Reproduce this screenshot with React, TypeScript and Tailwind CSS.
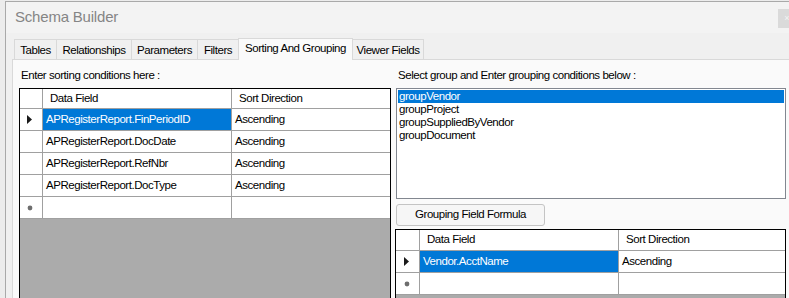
import React from "react";

type Row = { field: string; dir: string };

const sortRows: Row[] = [
  { field: "APRegisterReport.FinPeriodID", dir: "Ascending" },
  { field: "APRegisterReport.DocDate", dir: "Ascending" },
  { field: "APRegisterReport.RefNbr", dir: "Ascending" },
  { field: "APRegisterReport.DocType", dir: "Ascending" },
];

const groups = ["groupVendor", "groupProject", "groupSuppliedByVendor", "groupDocument"];

const tabs = [
  { label: "Tables", w: "w-[42px]" },
  { label: "Relationships", w: "w-[75px]" },
  { label: "Parameters", w: "w-[66px]" },
  { label: "Filters", w: "w-[41px]" },
  { label: "Sorting And Grouping", w: "w-[115px]", active: true },
  { label: "Viewer Fields", w: "w-[71px]" },
];

function CurrentMark() {
  return (
    <svg width="6" height="9" viewBox="0 0 6 9">
      <path d="M0 0 L5 4.5 L0 9 Z" fill="#1a1a1a" />
    </svg>
  );
}

function NewMark() {
  return (
    <svg width="6" height="6" viewBox="0 0 6 6">
      <circle cx="3" cy="3" r="2.4" fill="#6e6e6e" />
    </svg>
  );
}

function Grid({
  rows,
  headW,
  col1W,
  headH,
}: {
  rows: Row[];
  headW: string;
  col1W: string;
  headH: string;
}) {
  return (
    <div className="flex h-full flex-col border border-black bg-[#ababab]">
      <div className={`flex ${headH} shrink-0 border-b border-[#a0a0a0] bg-white`}>
        <div className={`${headW} shrink-0 border-r border-[#a0a0a0]`} />
        <div className={`${col1W} shrink-0 border-r border-[#a0a0a0] pl-[7px] leading-[19px]`}>
          Data Field
        </div>
        <div className="flex-1 pl-[7px] leading-[19px]">Sort Direction</div>
      </div>
      {rows.map((r, i) => (
        <div key={r.field} className="flex h-[22px] shrink-0 border-b border-[#a0a0a0] bg-white">
          <div
            className={`${headW} flex shrink-0 items-center justify-center border-r border-[#a0a0a0] pr-[2px]`}
          >
            {i === 0 && <CurrentMark />}
          </div>
          <div
            className={`${col1W} shrink-0 border-r border-[#a0a0a0] pl-[3px] leading-[21px] ${
              i === 0 ? "bg-[#0078d7] text-white" : ""
            }`}
          >
            {r.field}
          </div>
          <div className="flex-1 pl-[3px] leading-[21px]">{r.dir}</div>
        </div>
      ))}
      <div className="flex h-[22px] shrink-0 border-b border-[#a0a0a0] bg-white">
        <div
          className={`${headW} flex shrink-0 items-center justify-center border-r border-[#a0a0a0] pr-[2px]`}
        >
          <NewMark />
        </div>
        <div className={`${col1W} shrink-0 border-r border-[#a0a0a0]`} />
        <div className="flex-1" />
      </div>
    </div>
  );
}

export default function App() {
  return (
    <div
      className="h-[298px] w-[789px] overflow-hidden bg-[#ececec] pl-[5px] pt-[1px] text-[11.5px] tracking-[-0.45px] text-black"
      style={{ fontFamily: '"Liberation Sans", Arial, sans-serif' }}
    >
      <div className="flex h-full flex-col border-l border-t border-[#a9a9a9] bg-[#f0f0f0]">
        {/* title bar */}
        <div className="flex h-[31px] shrink-0 items-start justify-between bg-[#f3f3f3]">
          <span className="pl-[9px] pt-[5px] text-[15px] leading-[20px] tracking-[-0.2px] text-[#858585]">
            Schema Builder
          </span>
          <div className="mt-[7px] flex h-[19px] w-[11px] items-center justify-end bg-[#dadada] text-[9px] leading-none text-[#f4f4f4]">
            ×
          </div>
        </div>

        {/* tab strip */}
        <div className="flex h-[26px] shrink-0 items-end pl-[8px]">
          {tabs.map((t, i) =>
            t.active ? (
              <div
                key={t.label}
                className={`${t.w} relative z-10 -mb-[1px] h-[22px] border-x border-t border-[#d9d9d9] bg-[#fafafa] text-center leading-[18px]`}
              >
                {t.label}
              </div>
            ) : (
              <div
                key={t.label}
                className={`${t.w} h-[20px] border-t border-[#d9d9d9] ${
                  i === tabs.length - 1 ? "border-r" : ""
                } ${tabs[i - 1]?.active ? "" : "border-l"} bg-[#f0f0f0] pt-[1px] text-center leading-[19px]`}
              >
                {t.label}
              </div>
            )
          )}
        </div>

        {/* tab page */}
        <div className="ml-[6px] flex min-h-0 flex-1 gap-[4px] border-l border-t border-[#d9d9d9] bg-[#fafafa] pl-[6px]">
          <div className="flex w-[372px] shrink-0 flex-col">
            <div className="h-[28px] shrink-0 pl-[2px] pt-[1px] leading-[28px]">
              Enter sorting conditions here :
            </div>
            <div className="min-h-0 flex-1">
              <div className="h-[240px]">
                <Grid rows={sortRows} headW="w-[23px]" col1W="w-[189px]" headH="h-[20px]" />
              </div>
            </div>
          </div>

          <div className="flex w-[391px] shrink-0 flex-col">
            <div className="h-[28px] shrink-0 pl-[3px] pt-[1px] leading-[28px]">
              Select group and Enter grouping conditions below :
            </div>
            <div className="ml-[1px] h-[111px] shrink-0 border border-[#828790] bg-white p-px">
              {groups.map((g, i) => (
                <div
                  key={g}
                  className={`h-[13px] pl-px leading-[13px] ${i === 0 ? "bg-[#0078d7] text-white" : ""}`}
                >
                  {g}
                </div>
              ))}
            </div>
            <div className="ml-[1px] mt-[5px] flex h-[22px] w-[149px] shrink-0 items-center justify-center rounded-[3px] border border-[#c4c4c4] bg-[#f6f6f6]">
              Grouping Field Formula
            </div>
            <div className="mt-[3px] h-[80px] shrink-0">
              <Grid
                rows={[{ field: "Vendor.AcctName", dir: "Ascending" }]}
                headW="w-[24px]"
                col1W="w-[199px]"
                headH="h-[21px]"
              />
            </div>
          </div>
        </div>
      </div>
    </div>
  );
}
